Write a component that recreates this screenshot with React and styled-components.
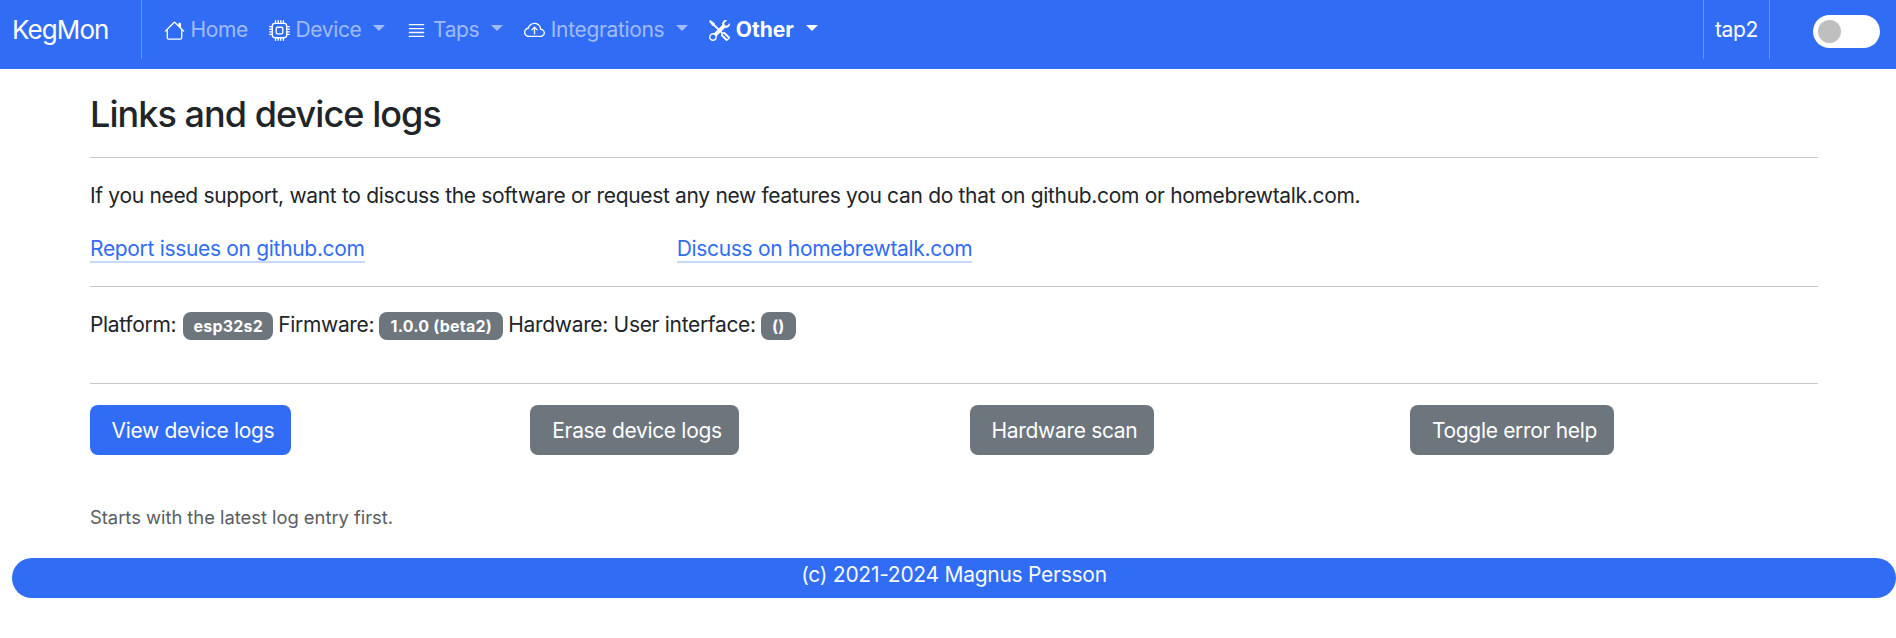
import React from "react";
import styled, { createGlobalStyle } from "styled-components";
import { BsHouse, BsCpu, BsJustify, BsCloudArrowUp, BsTools } from "react-icons/bs";

const GlobalStyle = createGlobalStyle`
  *, *::before, *::after { box-sizing: border-box; }
  body {
    margin: 0;
    background: #fff;
    color: #212529;
    font-family: Inter, "Liberation Sans", sans-serif;
    font-size: 21px;
    line-height: 31px;
    letter-spacing: -0.32px;
    -webkit-font-smoothing: antialiased;
  }
`;

const Navbar = styled.nav`
  display: flex;
  align-items: flex-start;
  height: 69px;
  padding: 0 16px 0 12px;
  background: #316cf4;
  color: #fff;
`;

const Brand = styled.a`
  width: 129px;
  padding-top: 14px;
  font-size: 26px;
  letter-spacing: -0.9px;
`;

const Rule = styled.div`
  width: 1px;
  height: 59px;
  background: rgba(255, 255, 255, 0.27);
`;

const NavList = styled.ul`
  display: flex;
  flex: 1;
  gap: 21px;
  margin: 0;
  padding: 14px 0 0 22px;
  list-style: none;
`;

const NavItem = styled.li`
  display: flex;
  align-items: flex-start;

  > svg {
    width: 21px;
    height: 21px;
    margin: 6px 5.5px 0 0;
  }
`;

const NavLabel = styled.span`
  color: ${({ $active }) => ($active ? "#fff" : "rgba(255, 255, 255, 0.55)")};
  font-weight: ${({ $active }) => ($active ? 700 : 400)};
  letter-spacing: ${({ $active }) => ($active ? "0" : "-0.35px")};
`;

const Caret = styled.span`
  margin: 11px 0 0 12px;
  border: 6.3px solid transparent;
  border-top-color: ${({ $active }) => ($active ? "#fff" : "rgba(255, 255, 255, 0.55)")};
  border-bottom: 0;
`;

const DeviceName = styled.span`
  width: 65px;
  padding-top: 14px;
  text-align: center;
`;

const Switch = styled.button`
  width: 67px;
  height: 33px;
  margin: 15px 0 0 43px;
  padding: 5px;
  border: 0;
  border-radius: 17px;
  background: #fff;
`;

const Knob = styled.span`
  display: block;
  width: 23px;
  height: 23px;
  border-radius: 50%;
  background: #bfbfbf;
`;

const Page = styled.main`
  padding: 25px 78px 0 90px;
`;

const Title = styled.h1`
  margin: 0;
  font-size: 36px;
  font-weight: 500;
  line-height: 41px;
  letter-spacing: -0.94px;
`;

const Divider = styled.hr`
  height: 1px;
  margin: ${({ $top }) => $top}px 0 ${({ $bottom }) => $bottom}px;
  border: 0;
  background: #c7c8c9;
`;

const Paragraph = styled.p`
  margin: 0 0 22px;
`;

const LinkRow = styled.div`
  display: grid;
  grid-template-columns: repeat(3, 586.67px);
  justify-items: start;
`;

const TextLink = styled.a`
  height: 30px;
  border-bottom: 2px solid #c8d8fd;
  color: #316cf4;
`;

const InfoRow = styled.div`
  display: flex;
  align-items: flex-start;
  height: 35px;
  padding-top: 1px;
`;

const Badge = styled.span`
  width: ${({ $width }) => $width}px;
  height: 28px;
  margin: 3px 5px 0 ${({ $left }) => $left}px;
  border-radius: 8px;
  background: #6d757d;
  color: #fff;
  font-size: 16px;
  font-weight: 700;
  line-height: 29px;
  letter-spacing: 0.2px;
  text-align: center;
`;

const ButtonRow = styled.div`
  display: grid;
  grid-template-columns: repeat(4, 440px);
  margin-right: -32px;
`;

const Button = styled.button`
  width: ${({ $width }) => $width}px;
  height: 50px;
  padding: 1px 0 0 5px;
  border: 0;
  border-radius: 8px;
  background: ${({ $primary }) => ($primary ? "#316cf4" : "#6d757d")};
  color: #fff;
  font: inherit;
  letter-spacing: inherit;
`;

const Hint = styled.p`
  margin: 48px 0 26px;
  color: #5a5d61;
  font-size: 18.4px;
  line-height: 29px;
  letter-spacing: -0.03px;
`;

const Footer = styled.footer`
  height: 40px;
  margin-left: 12px;
  border-radius: 20px;
  background: #316cf4;
  color: #f8f9fa;
  line-height: 34px;
  letter-spacing: -0.27px;
  text-align: center;
`;

const navItems = [
  { label: "Home", icon: BsHouse },
  { label: "Device", icon: BsCpu, menu: true },
  { label: "Taps", icon: BsJustify, menu: true },
  { label: "Integrations", icon: BsCloudArrowUp, menu: true },
  { label: "Other", icon: BsTools, menu: true, active: true },
];

export default function App() {
  return (
    <>
      <GlobalStyle />
      <Navbar>
        <Brand>KegMon</Brand>
        <Rule />
        <NavList>
          {navItems.map(({ label, icon: Icon, menu, active }) => (
            <NavItem key={label}>
              <Icon />
              <NavLabel $active={active}>{label}</NavLabel>
              {menu && <Caret $active={active} />}
            </NavItem>
          ))}
        </NavList>
        <Rule />
        <DeviceName>tap2</DeviceName>
        <Rule />
        <Switch aria-label="Toggle dark mode">
          <Knob />
        </Switch>
      </Navbar>
      <Page>
        <Title>Links and device logs</Title>
        <Divider $top={22} $bottom={22} />
        <Paragraph>
          If you need support, want to discuss the software or request any new features you can do
          that on github.com or homebrewtalk.com.
        </Paragraph>
        <LinkRow>
          <TextLink>Report issues on github.com</TextLink>
          <TextLink>Discuss on homebrewtalk.com</TextLink>
        </LinkRow>
        <Divider $top={23} $bottom={21} />
        <InfoRow>
          Platform:<Badge $width={90} $left={7}>esp32s2</Badge>
          Firmware:<Badge $width={124} $left={5}>1.0.0 (beta2)</Badge>
          Hardware: User interface:<Badge $width={35} $left={5}>()</Badge>
        </InfoRow>
        <Divider $top={40} $bottom={21} />
        <ButtonRow>
          <Button $primary $width={201}>View device logs</Button>
          <Button $width={209}>Erase device logs</Button>
          <Button $width={184}>Hardware scan</Button>
          <Button $width={204}>Toggle error help</Button>
        </ButtonRow>
        <Hint>Starts with the latest log entry first.</Hint>
      </Page>
      <Footer>(c) 2021-2024 Magnus Persson</Footer>
    </>
  );
}
